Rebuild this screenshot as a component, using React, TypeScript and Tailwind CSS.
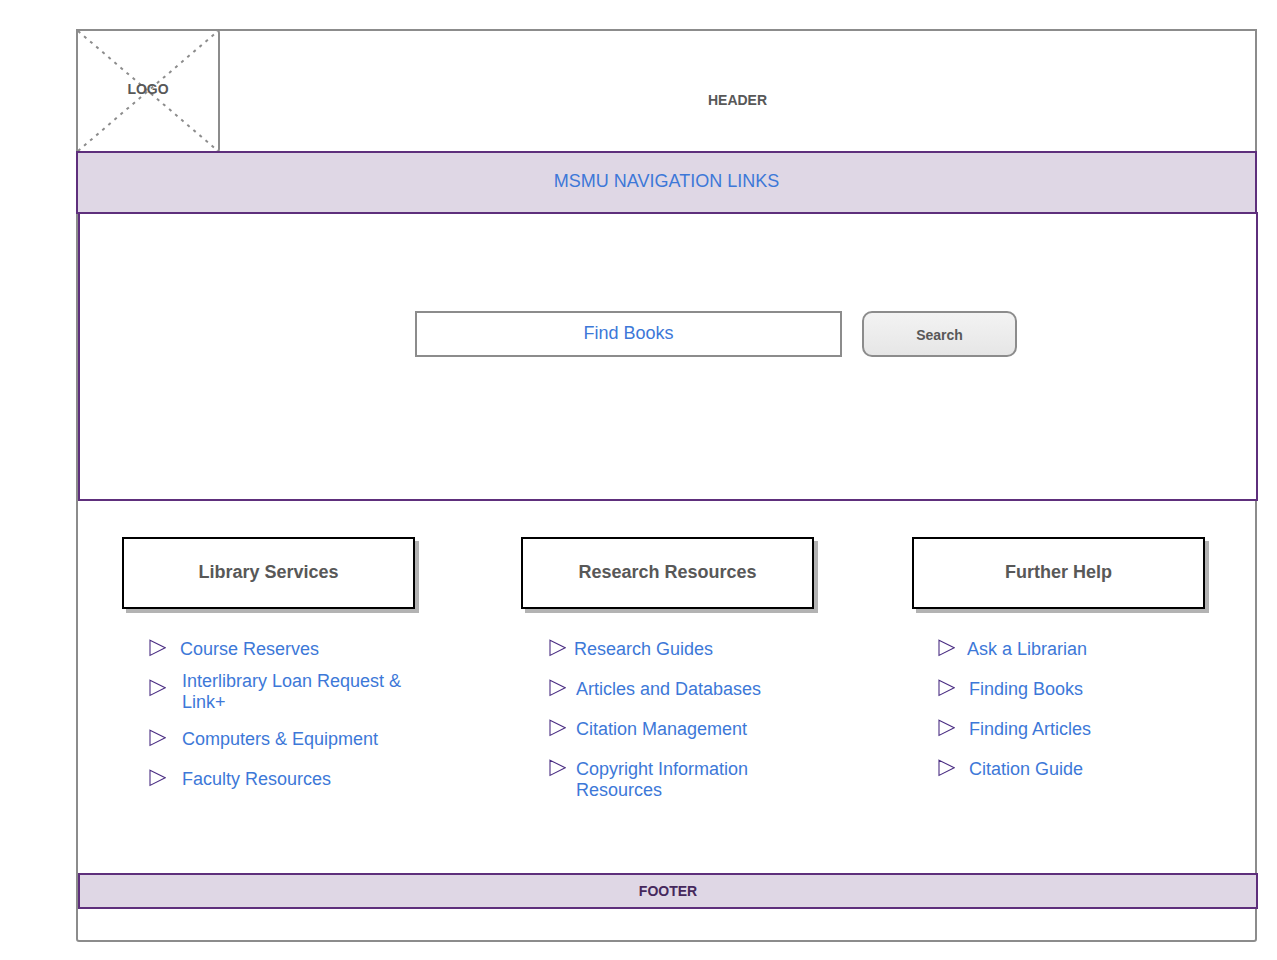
type LinkColumn = {
  title: string;
  links: string[];
  listClass: string;
  itemClass: string;
};

const columns: LinkColumn[] = [
  {
    title: 'Library Services',
    links: [
      'Course Reserves',
      'Interlibrary Loan Request & Link+',
      'Computers & Equipment',
      'Faculty Resources',
    ],
    listClass: 'pl-[27px]',
    itemClass: 'gap-4 first:gap-3.5',
  },
  {
    title: 'Research Resources',
    links: [
      'Research Guides',
      'Articles and Databases',
      'Citation Management',
      'Copyright Information Resources',
    ],
    listClass: 'pl-7',
    itemClass: 'gap-2.5 first:gap-2',
  },
  {
    title: 'Further Help',
    links: ['Ask a Librarian', 'Finding Books', 'Finding Articles', 'Citation Guide'],
    listClass: 'pl-[26px]',
    itemClass: 'gap-3.5 first:gap-3',
  },
];

function Arrow({ className }: { className: string }) {
  return (
    <svg className={`h-5 w-[17px] shrink-0 ${className}`} viewBox="0 0 17 20" fill="none" aria-hidden="true">
      <path d="M1 1.2 L16.2 8.8 L1 16.4 Z" stroke="#4b2e83" strokeWidth="1.1" />
    </svg>
  );
}

function LogoBox() {
  return (
    <div className="relative -mt-0.5 -mb-0.5 -ml-0.5 flex w-36 shrink-0 items-center justify-center rounded-sm border-2 border-[#8c8c8c] pb-1">
      <svg
        className="absolute inset-0 h-full w-full"
        viewBox="0 0 140 120"
        preserveAspectRatio="none"
        aria-hidden="true"
      >
        <path
          d="M0 0 L140 120 M0 120 L140 0"
          stroke="#8c8c8c"
          strokeWidth="2"
          strokeDasharray="3 5"
          fill="none"
        />
      </svg>
      <span className="relative">LOGO</span>
    </div>
  );
}

function Column({ title, links, listClass, itemClass }: LinkColumn) {
  return (
    <section>
      <h2 className="flex h-[72px] w-[293px] items-center justify-center border-2 border-black bg-white pb-0.5 text-lg font-bold shadow-[4px_4px_0_#b3b3b3]">
        {title}
      </h2>
      <ul className={`pt-[30px] text-[18px] leading-[21px] ${listClass}`}>
        {links.map((label) => {
          const tall = label.startsWith('Interlibrary');
          return (
            <li
              key={label}
              className={`flex items-start ${itemClass} ${tall ? '-mt-2 min-h-[58px]' : 'min-h-10'}`}
            >
              <Arrow className={tall ? 'mt-2' : 'mt-0'} />
              <a href="#" className="max-w-[240px] text-[#3d78d8]">
                {label}
              </a>
            </li>
          );
        })}
      </ul>
    </section>
  );
}

export default function App() {
  return (
    <div className="min-h-screen bg-white pt-[29px] pr-5 pb-[19px] pl-[76px] font-['Liberation_Sans',Arial,sans-serif] text-[#585858]">
      <div className="rounded-b-[3px] border-2 border-[#8c8c8c]">
        <header className="flex h-[120px] text-sm font-bold">
          <LogoBox />
          <h1 className="flex flex-1 items-center justify-center pt-[18px]">HEADER</h1>
        </header>

        <nav className="relative -mx-0.5 flex h-[63px] items-center justify-center border-2 border-[#5e2f7c] bg-[#dfd7e5] pb-[3px] text-lg">
          <a href="#" className="text-[#3d78d8]">
            MSMU NAVIGATION LINKS
          </a>
        </nav>

        <main>
          <div className="relative -mt-0.5 -mr-[3px] h-[289px] border-2 border-[#5e2f7c] bg-white pt-[97px] pl-24">
            <form className="flex justify-center gap-5" onSubmit={(e) => e.preventDefault()}>
              <input
                type="text"
                aria-label="Find Books"
                placeholder="Find Books"
                className="h-[46px] w-[427px] border-2 border-[#8c8c8c] bg-white pb-0.5 text-center text-lg outline-none placeholder:text-[#3d78d8] placeholder:opacity-100"
              />
              <button
                type="submit"
                className="h-[46px] w-[155px] rounded-[10px] border-2 border-[#8c8c8c] bg-linear-to-b from-[#f3f3f3] to-[#e6e6e6] pt-0.5 text-sm font-bold"
              >
                Search
              </button>
            </form>
          </div>

          <div className="grid grid-cols-[399fr_391fr_293fr] pt-9 pr-[50px] pb-16 pl-11">
            {columns.map((column) => (
              <Column key={column.title} {...column} />
            ))}
          </div>
        </main>

        <footer className="relative -mr-[3px] mb-[31px] flex h-9 items-center justify-center border-2 border-[#5e2f7c] bg-[#dfd7e5] text-sm font-bold text-[#45285c]">
          FOOTER
        </footer>
      </div>
    </div>
  );
}
